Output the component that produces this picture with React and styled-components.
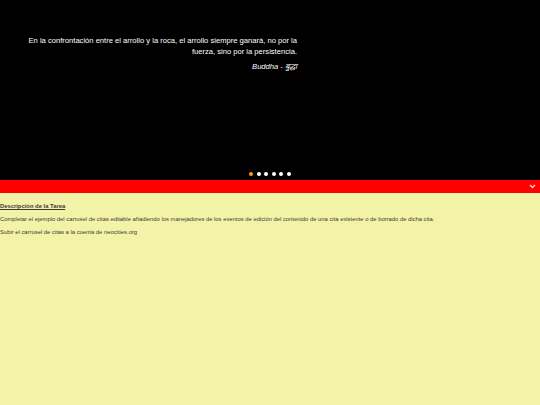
import React, { useState } from "react";
import styled, { createGlobalStyle } from "styled-components";

const Global = createGlobalStyle`
  html, body { margin: 0; padding: 0; background: #f3f3a8; }
  body { font-family: "Liberation Sans", Arial, sans-serif; }
`;

const quotes = [
  {
    text: "En la confrontación entre el arrollo y la roca, el arrollo siempre ganará, no por la fuerza, sino por la persistencia.",
    author: "Buddha - बुद्धा",
  },
  { text: "", author: "" },
  { text: "", author: "" },
  { text: "", author: "" },
  { text: "", author: "" },
  { text: "", author: "" },
];

const Carousel = styled.section`
  background: #000;
  height: 180px;
  display: flex;
  flex-direction: column;
  justify-content: space-between;
`;

const Quote = styled.blockquote`
  margin: 0;
  width: 271px;
  padding: 35px 0 0 26px;
  color: #fff;
  text-align: right;
`;

const QuoteText = styled.p`
  margin: 0;
  font-size: 7.6px;
  line-height: 11px;
`;

const Author = styled.p`
  margin: 4px 0 0;
  font-size: 7.6px;
  font-style: italic;
  line-height: 11px;
`;

const Dots = styled.div`
  display: flex;
  justify-content: center;
  gap: 3.6px;
  padding: 0 0 4px 0;
`;

const Dot = styled.button`
  width: 4px;
  height: 4px;
  padding: 0;
  border: none;
  border-radius: 50%;
  background: ${(p) => (p.$active ? "#f7a21b" : "#fff")};
  cursor: pointer;
`;

const Bar = styled.div`
  background: #ff0000;
  height: 13px;
  display: flex;
  align-items: center;
  justify-content: flex-end;
  padding-right: 4px;
`;

const Toggle = styled.span`
  display: flex;
  color: #ffd6d6;
`;

const Task = styled.section`
  color: #3a3a3a;
  font-size: 5.85px;
  padding-top: 10px;
`;

const Title = styled.h3`
  margin: 0 0 7px;
  font-size: 5.85px;
  font-weight: bold;
  text-decoration: underline;
`;

const Line = styled.p`
  margin: 0 0 5.5px;
  line-height: 7px;
`;

export default function App() {
  const [active, setActive] = useState(0);
  const q = quotes[0];
  return (
    <>
      <Global />
      <Carousel>
        <Quote>
          <QuoteText>{q.text}</QuoteText>
          <Author>{q.author}</Author>
        </Quote>
        <Dots>
          {quotes.map((_, i) => (
            <Dot key={i} $active={i === active} onClick={() => setActive(i)} />
          ))}
        </Dots>
      </Carousel>
      <Bar>
        <Toggle>
          <svg width="7" height="5" viewBox="0 0 7 5">
            <path d="M1 1 L3.5 3.5 L6 1" stroke="currentColor" strokeWidth="1.4" fill="none" />
          </svg>
        </Toggle>
      </Bar>
      <Task>
        <Title>Descripción de la Tarea</Title>
        <Line>
          Completar el ejemplo del carrusel de citas editable añadiendo los manejadores de los eventos de edición del contenido de una cita existente o de borrado de dicha cita.
        </Line>
        <Line>Subir el carrusel de citas a la cuenta de neocities.org</Line>
      </Task>
    </>
  );
}
